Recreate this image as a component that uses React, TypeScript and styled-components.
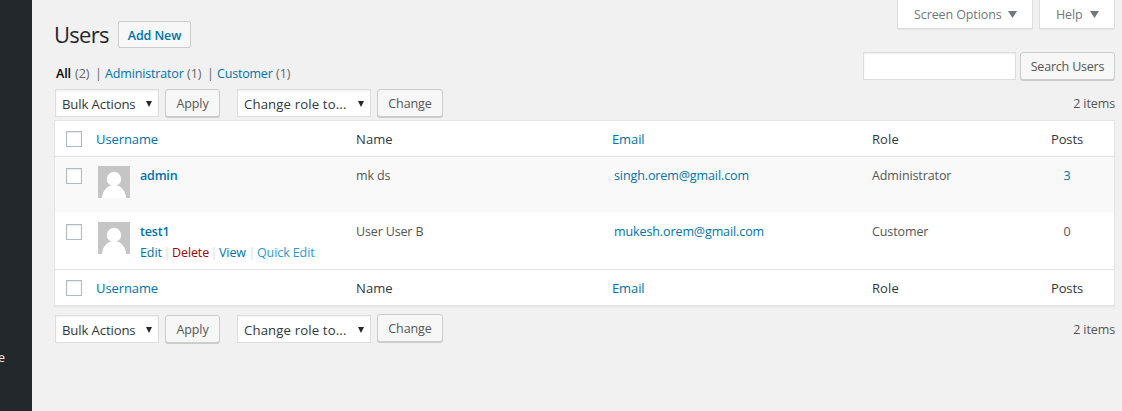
import React from "react";
import styled, { createGlobalStyle } from "styled-components";

const GlobalStyle = createGlobalStyle`
  *, *::before, *::after { box-sizing: border-box; }
  body {
    margin: 0;
    background: #f1f1f1;
    color: #555;
    font-family: "Open Sans", "Noto Sans", sans-serif;
    font-size: 12.5px;
    line-height: 18px;
  }
  button, input { font: inherit; }
`;

const Page = styled.div`
  display: flex;
  height: 411px;
  overflow: hidden;
`;

const Sidebar = styled.aside`
  flex: none;
  width: 32px;
  padding-top: 349px;
  background: #23282d;
  color: #eee;
`;

const SidebarItem = styled.div`
  margin-left: -2px;
`;

const Content = styled.main`
  flex: 1;
  min-width: 0;
  display: flex;
  flex-direction: column;
  padding: 0 7px 0 22px;
`;

const Header = styled.header`
  display: flex;
  justify-content: space-between;
  height: 89px;
`;

const HeaderLeft = styled.div`
  padding-top: 21px;
`;

const HeaderRight = styled.div`
  display: flex;
  flex-direction: column;
  align-items: flex-end;
`;

const TitleRow = styled.div`
  display: flex;
  align-items: center;
  gap: 9px;
  height: 27px;
`;

const Label = styled.span<{ $track?: number }>`
  letter-spacing: ${(p) => p.$track ?? -0.1}px;
  white-space: nowrap;
`;

const Title = styled.h1`
  width: 55px;
  margin: 0;
  color: #23282d;
  font-size: 22px;
  font-weight: 400;
  line-height: 27px;
  letter-spacing: -0.7px;
  white-space: nowrap;
`;

const AddNew = styled.button`
  width: 73px;
  height: 27px;
  padding: 2px 0 0;
  border: 1px solid #ccc;
  border-radius: 2px;
  background: #f7f7f7;
  color: #0073aa;
  font-weight: 600;
`;

const Filters = styled.nav`
  display: flex;
  height: 18px;
  margin: 17px 0 0 2px;
`;

const Filter = styled.a<{ $width: number; $current?: boolean }>`
  width: ${(p) => p.$width}px;
  color: ${(p) => (p.$current ? "#000" : "#0073aa")};
  font-weight: ${(p) => (p.$current ? 600 : 400)};
`;

const Count = styled.span`
  width: 17px;
  color: #666;
`;

const Divider = styled.span`
  width: 13px;
  text-align: center;
  color: #666;
`;

const ScreenTabs = styled.div`
  display: flex;
  gap: 6px;
  height: 52px;
`;

const ScreenTab = styled.button<{ $width: number }>`
  display: flex;
  align-items: center;
  justify-content: space-between;
  width: ${(p) => p.$width}px;
  height: 29px;
  padding: 1px 15px 0 16px;
  border: 1px solid #ddd;
  border-top: 0;
  background: #fff;
  box-shadow: 0 1px 1px -1px rgba(0, 0, 0, 0.3);
  color: #72777c;
`;

const SearchRow = styled.div`
  display: flex;
  gap: 4px;
`;

const SearchInput = styled.input`
  width: 153px;
  height: 28px;
  border: 1px solid #ddd;
  background: #fff;
  box-shadow: inset 0 1px 2px rgba(0, 0, 0, 0.07);
`;

const Button = styled.button<{ $width: number }>`
  width: ${(p) => p.$width}px;
  height: 28px;
  padding: 1px 0 0;
  border: 1px solid #ccc;
  border-radius: 3px;
  background: #f7f7f7;
  box-shadow: 0 1px 0 #ccc;
  color: #555;
  line-height: 25px;
`;

const Toolbar = styled.div<{ $bottom?: boolean }>`
  display: flex;
  align-items: flex-start;
  height: ${(p) => (p.$bottom ? 38 : 31)}px;
  padding: ${(p) => (p.$bottom ? "9px 0 0 1px" : "0 0 0 1px")};
`;

const SelectBox = styled.button<{ $width: number }>`
  display: flex;
  align-items: center;
  justify-content: space-between;
  width: ${(p) => p.$width}px;
  height: 28px;
  margin-right: 6px;
  padding: 1px 6px 0 6px;
  border: 1px solid #ddd;
  background: #fff;
  box-shadow: inset 0 1px 2px rgba(0, 0, 0, 0.07);
  color: #32373c;
  font-size: 13.2px;
`;

const Group = styled.div<{ $lift?: boolean }>`
  display: flex;
  margin-right: 17px;

  ${Button} {
    margin-top: ${(p) => (p.$lift ? -1 : 0)}px;
  }
`;

const ItemCount = styled.span`
  margin: 6px 0 0 auto;
`;

const Table = styled.div`
  height: 186px;
  border: 1px solid #e5e5e5;
  background: #fff;
  box-shadow: 0 1px 1px rgba(0, 0, 0, 0.04);
`;

const Row = styled.div<{ $striped?: boolean }>`
  display: grid;
  grid-template-columns: 41px 260px 256px 260px 148px 94px;
  height: 56px;
  padding-top: 10px;
  background: ${(p) => (p.$striped ? "#f9f9f9" : "#fff")};
`;

const HeadRow = styled(Row)<{ $foot?: boolean }>`
  height: 36px;
  padding-top: 9px;
  border-top: ${(p) => (p.$foot ? "1px solid #e1e1e1" : "0")};
  border-bottom: ${(p) => (p.$foot ? "0" : "1px solid #e1e1e1")};
  color: #32373c;
  font-size: 13px;
`;

const Checkbox = styled.input.attrs({ type: "checkbox" })`
  appearance: none;
  width: 16px;
  height: 16px;
  margin: 1px 0 0 11px;
  border: 1px solid #b4b9be;
  background: #fff;
  box-shadow: inset 0 1px 2px rgba(0, 0, 0, 0.1);
`;

const Cell = styled.div<{ $indent?: number; $link?: boolean; $center?: boolean }>`
  padding-left: ${(p) => p.$indent ?? 0}px;
  color: ${(p) => (p.$link ? "#0073aa" : "inherit")};
  text-align: ${(p) => (p.$center ? "center" : "left")};
`;

const UserCell = styled.div`
  display: flex;
  gap: 10px;
  padding-left: 2px;
`;

const AvatarArt = styled.svg`
  flex: none;
  display: block;
  width: 32px;
  height: 32px;
  margin-top: -1px;
`;

const UserName = styled.div`
  color: #0073aa;
  font-weight: 600;
`;

const Actions = styled.div`
  display: flex;
  margin-top: 3px;
`;

const Action = styled.a<{ $width: number; $color?: string }>`
  width: ${(p) => p.$width}px;
  color: ${(p) => p.$color ?? "#0073aa"};
`;

const ActionBar = styled.span`
  width: 10px;
  text-align: center;
  color: #ddd;
`;

const Arrow = ({ w = 8, h = 7, color = "#23282d" }: { w?: number; h?: number; color?: string }) => (
  <svg width={w} height={h} viewBox="0 0 10 10" preserveAspectRatio="none" aria-hidden="true">
    <path d="M0 0h10L5 10z" fill={color} />
  </svg>
);

const Avatar = () => (
  <AvatarArt viewBox="0 0 32 32" aria-hidden="true">
    <path d="M0 0h32v32H0z" fill="#c5c5c5" />
    <circle cx="16" cy="13" r="7.2" fill="#fff" />
    <ellipse cx="16" cy="32.500" rx="12" ry="13.500" fill="#fff" />
  </AvatarArt>
);

const BulkBar = ({ bottom }: { bottom?: boolean }) => (
  <Toolbar $bottom={bottom}>
    <Group>
      <SelectBox $width={104}>
        <Label $track={-0.15}>Bulk Actions</Label>
        <Arrow w={6} h={6} />
      </SelectBox>
      <Button $width={55}><Label>Apply</Label></Button>
    </Group>
    <Group $lift={bottom}>
      <SelectBox $width={134}>
        <Label $track={0.13}>Change role to...</Label>
        <Arrow w={6} h={6} />
      </SelectBox>
      <Button $width={66}><Label>Change</Label></Button>
    </Group>
    <ItemCount><Label>2 items</Label></ItemCount>
  </Toolbar>
);

const HeadingRow = ({ foot }: { foot?: boolean }) => (
  <HeadRow $foot={foot}>
    <Checkbox aria-label="Select all" />
    <Cell $link><Label>Username</Label></Cell>
    <Cell><Label $track={0.1}>Name</Label></Cell>
    <Cell $link><Label>Email</Label></Cell>
    <Cell><Label $track={0.1}>Role</Label></Cell>
    <Cell $center><Label>Posts</Label></Cell>
  </HeadRow>
);

interface User {
  login: string;
  name: string;
  email: string;
  role: string;
  posts: number;
  actions?: boolean;
}

const users: User[] = [
  { login: "admin", name: "mk ds", email: "singh.orem@gmail.com", role: "Administrator", posts: 3 },
  { login: "test1", name: "User User B", email: "mukesh.orem@gmail.com", role: "Customer", posts: 0, actions: true },
];

const UserRow = ({ user, striped }: { user: User; striped?: boolean }) => (
  <Row $striped={striped}>
    <Checkbox aria-label={`Select ${user.login}`} />
    <UserCell>
      <Avatar />
      <div>
        <UserName><Label $track={-0.2}>{user.login}</Label></UserName>
        {user.actions && (
          <Actions>
            <Action $width={22}><Label>Edit</Label></Action>
            <ActionBar>|</ActionBar>
            <Action $width={37} $color="#a00"><Label>Delete</Label></Action>
            <ActionBar>|</ActionBar>
            <Action $width={28}><Label>View</Label></Action>
            <ActionBar>|</ActionBar>
            <Action $width={60} $color="#1e9bd0"><Label>Quick Edit</Label></Action>
          </Actions>
        )}
      </div>
    </UserCell>
    <Cell><Label $track={-0.15}>{user.name}</Label></Cell>
    <Cell $link $indent={2}><Label>{user.email}</Label></Cell>
    <Cell><Label>{user.role}</Label></Cell>
    <Cell $center $link={user.posts > 0}>{user.posts}</Cell>
  </Row>
);

export default function App() {
  return (
    <>
      <GlobalStyle />
      <Page>
        <Sidebar><SidebarItem>e</SidebarItem></Sidebar>
        <Content>
          <Header>
            <HeaderLeft>
              <TitleRow>
                <Title>Users</Title>
                <AddNew><Label>Add New</Label></AddNew>
              </TitleRow>
              <Filters>
                <Filter $width={19} $current><Label>All</Label></Filter>
                <Count>(2)</Count>
                <Divider>|</Divider>
                <Filter $width={82}><Label $track={-0.15}>Administrator</Label></Filter>
                <Count>(1)</Count>
                <Divider>|</Divider>
                <Filter $width={59}><Label $track={-0.2}>Customer</Label></Filter>
                <Count>(1)</Count>
              </Filters>
            </HeaderLeft>
            <HeaderRight>
              <ScreenTabs>
                <ScreenTab $width={136}><Label>Screen Options</Label><Arrow w={9} color="#72777c" /></ScreenTab>
                <ScreenTab $width={76}><Label>Help</Label><Arrow w={9} color="#72777c" /></ScreenTab>
              </ScreenTabs>
              <SearchRow>
                <SearchInput aria-label="Search users" />
                <Button $width={95}><Label $track={-0.2}>Search Users</Label></Button>
              </SearchRow>
            </HeaderRight>
          </Header>
          <BulkBar />
          <Table>
            <HeadingRow />
            {users.map((user, i) => (
              <UserRow key={user.login} user={user} striped={i % 2 === 0} />
            ))}
            <HeadingRow foot />
          </Table>
          <BulkBar bottom />
        </Content>
      </Page>
    </>
  );
}
